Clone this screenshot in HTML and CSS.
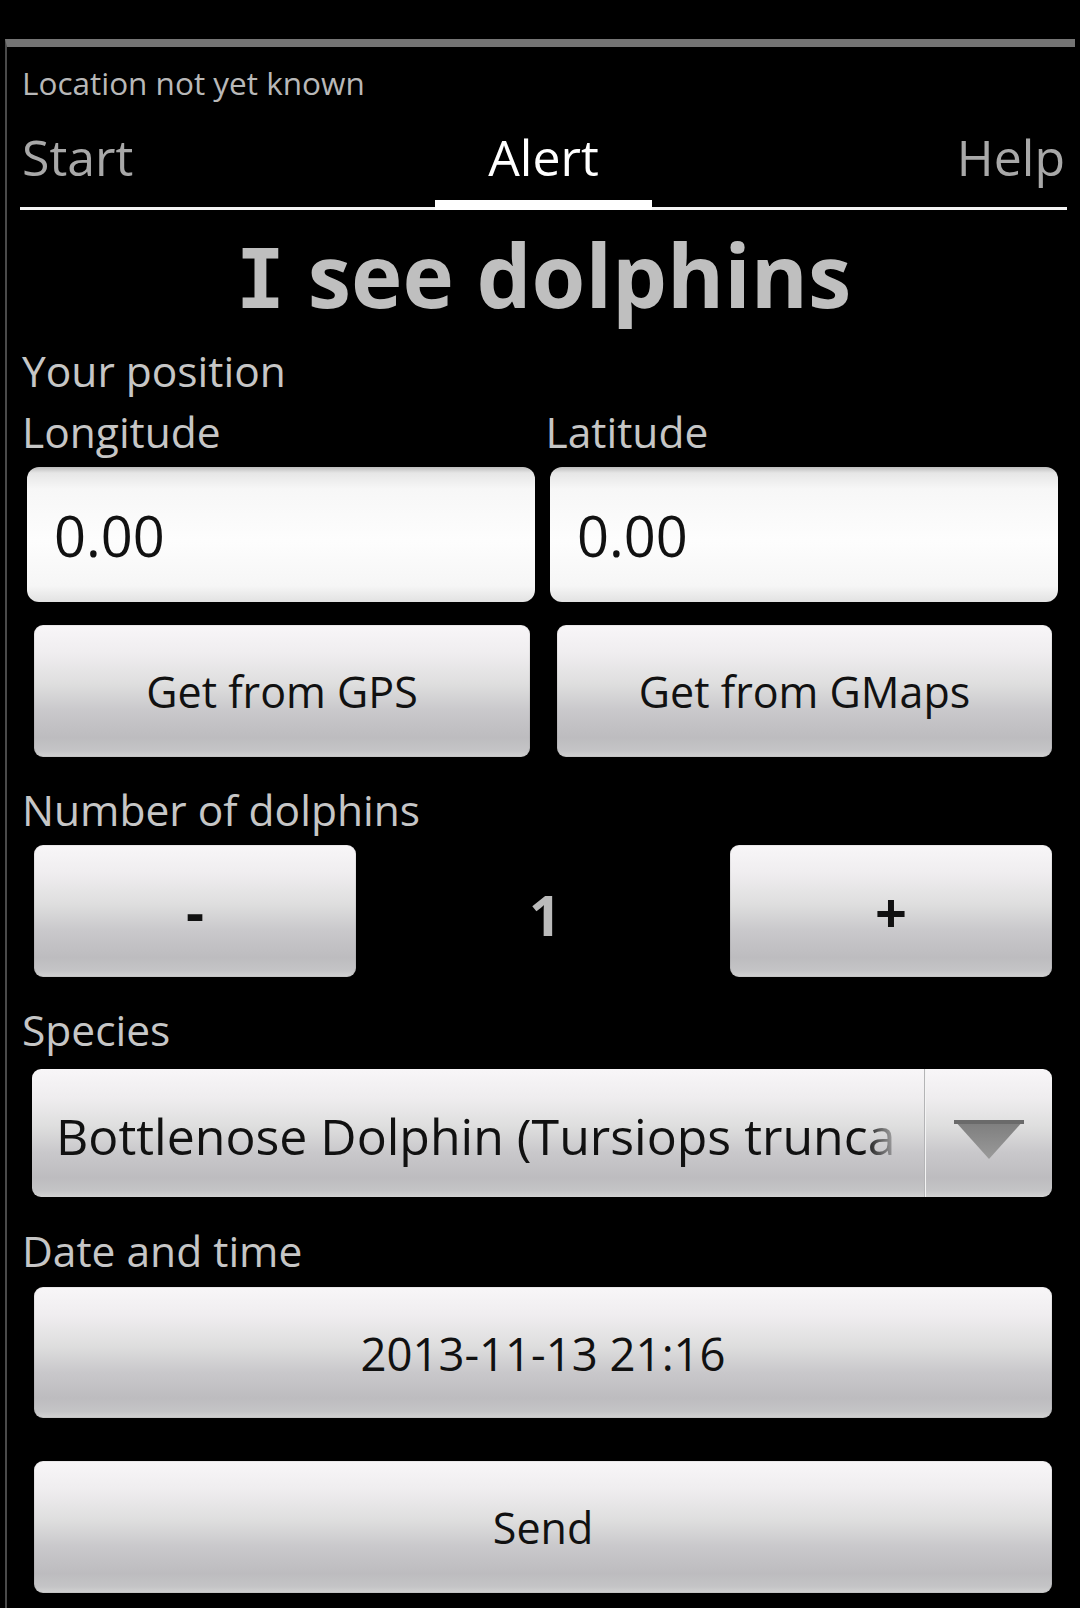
FILE: index.html
```html
<!DOCTYPE html>
<html>
<head>
<meta charset="utf-8">
<link rel="stylesheet" href="styles.css">
</head>
<body>
<div class="screen">
  <div class="window">
    <div class="loc">Location not yet known</div>
    <div class="tabs">
      <span class="tab tab-left">Start</span>
      <span class="tab tab-active">Alert</span>
      <span class="tab tab-right">Help</span>
    </div>
    <div class="tabline"><div class="seg"></div><div class="ind"></div><div class="seg"></div></div>
    <h1 class="title"><span class="cap-i">I</span> see dolphins</h1>
    <div class="label pos-label">Your position</div>
    <div class="cols labels2">
      <div class="label">Longitude</div>
      <div class="label">Latitude</div>
    </div>
    <div class="cols fields">
      <div class="field field-l">0.00</div>
      <div class="field field-r">0.00</div>
    </div>
    <div class="cols btns">
      <div class="btn btn-l">Get from GPS</div>
      <div class="btn btn-r">Get from GMaps</div>
    </div>
    <div class="label sec">Number of dolphins</div>
    <div class="counter">
      <div class="btn btn-sq sym">-</div>
      <div class="count">1</div>
      <div class="btn btn-sq sym">+</div>
    </div>
    <div class="label sec">Species</div>
    <div class="spinner">
      <div class="spin-text">Bottlenose Dolphin (Tursiops trunca</div>
      <div class="spin-arrow">
        <svg width="70" height="40" viewBox="0 0 70 40">
          <defs>
            <linearGradient id="ag" x1="0" y1="0" x2="0" y2="1">
              <stop offset="0" stop-color="#7c7c7c"/>
              <stop offset="1" stop-color="#9a9a9a"/>
            </linearGradient>
          </defs>
          <polygon points="0,0 70,0 35,39" fill="url(#ag)"/>
          <rect x="0" y="0" width="70" height="4" fill="#6a6a6a"/>
        </svg>
      </div>
    </div>
    <div class="label sec date-label">Date and time</div>
    <div class="btn btn-wide date-btn">2013-11-13 21:16</div>
    <div class="btn btn-wide send-btn">Send</div>
  </div>
</div>
</body>
</html>
```
FILE: styles.css
```css
html, body {
  margin: 0;
  padding: 0;
  background: #000;
}
body {
  font-family: "Open Sans", "DejaVu Sans", sans-serif;
  width: 1080px;
  height: 1608px;
  overflow: hidden;
}
.screen {
  padding-top: 39px;
}
.window {
  margin-left: 5px;
  width: 1070px;
  height: 1569px;
  box-sizing: border-box;
  border-top: 8px solid #747474;
  border-left: 2px solid #4a4a4a;
  padding: 16px 8px 0 13px;
}
.loc {
  font-size: 31.5px;
  line-height: 40px;
  height: 40px;
  color: #b8b8b8;
  padding-left: 2px;
}
.tabs {
  margin-top: 19px;
  height: 78px;
  line-height: 70px;
  font-size: 50px;
  display: grid;
  grid-template-columns: 1fr auto 1fr;
  color: #a8a8a8;
}
.tab-left { justify-self: start; padding-left: 2px; }
.tab-active { color: #fff; }
.tab-right { justify-self: end; padding-right: 2px; }
.tabline {
  height: 10px;
  display: flex;
  align-items: flex-end;
}
.tabline .seg {
  flex: 1;
  height: 3px;
  background: #f4f4f4;
}
.tabline .ind {
  width: 217px;
  height: 10px;
  background: #fff;
}
.title {
  margin: 14px 0 0 0;
  font-size: 87px;
  line-height: 100px;
  height: 100px;
  font-weight: bold;
  text-align: center;
  color: #bfbfbf;
  white-space: nowrap;
}
.cap-i {
  font-family: "DejaVu Sans Mono", monospace;
  font-size: 82px;
}
.label {
  font-size: 42.5px;
  line-height: 58px;
  height: 58px;
  color: #c6c6c6;
  padding-left: 2px;
  white-space: nowrap;
}
.pos-label { margin-top: 18px; }
.cols {
  display: grid;
  grid-template-columns: 1fr 1fr;
}
.labels2 { margin-top: 3px; }
.fields { margin-top: 6px; }
.field {
  height: 135px;
  box-sizing: border-box;
  border-radius: 12px;
  background: linear-gradient(#bdbdbd 0px, #e6e6e6 6px, #f7f7f7 22px, #fdfdfd 55%, #f6f6f6 88%, #e2e2e2 100%);
  font-size: 56px;
  line-height: 74px;
  padding: 31px 0 0 27px;
  color: #111;
}
.field-l { margin: 0 8.5px 0 7px; }
.field-r { margin: 0 9px 0 6.5px; }
.btn {
  box-sizing: border-box;
  border-radius: 9px;
  background: linear-gradient(#f8f6f8 0%, #efedef 22%, #dedede 45%, #c9c8cb 65%, #bdbcbf 85%, #c4c4c6 95%, #d2d2d2 100%);
  box-shadow: inset 0 0 0 1px rgba(0,0,0,0.06);
  color: #111;
  font-size: 43px;
  display: flex;
  align-items: center;
  justify-content: center;
  white-space: nowrap;
}
.btns { margin-top: 23px; }
.btns .btn { height: 132px; }
.btn-l { margin: 0 13.5px 0 14px; }
.btn-r { margin: 0 15px 0 13.5px; }
.sec { margin-top: 24px; }
.counter {
  margin: 6px 15px 0 14px;
  height: 132px;
  display: flex;
  justify-content: space-between;
  align-items: center;
}
.btn-sq {
  width: 322px;
  height: 132px;
}
.sym {
  font-weight: bold;
  font-size: 56px;
}
.count {
  font-size: 56px;
  font-weight: bold;
  color: #bbb;
  padding-top: 6px;
  padding-left: 4px;
}
.spinner {
  margin: 10px 15px 0 12px;
  height: 128px;
  border-radius: 9px;
  background: linear-gradient(#f8f6f8 0%, #efedef 22%, #dedede 45%, #c9c8cb 65%, #bdbcbf 85%, #c4c4c6 95%, #d2d2d2 100%);
  display: flex;
  align-items: stretch;
}
.spin-text {
  flex: 1;
  min-width: 0;
  white-space: nowrap;
  font-size: 50px;
  color: #111;
  display: flex;
  align-items: center;
  padding: 6px 0 0 24px;
  -webkit-mask-image: linear-gradient(to right, #000 calc(100% - 60px), rgba(0,0,0,0.2) calc(100% - 28px));
  mask-image: linear-gradient(to right, #000 calc(100% - 60px), rgba(0,0,0,0.2) calc(100% - 28px));
}
.spin-arrow {
  width: 128px;
  border-left: 1px solid #b4b4b6;
  box-shadow: inset 1px 0 0 #f4f4f4;
  display: flex;
  align-items: center;
  justify-content: center;
  padding-top: 14px;
  box-sizing: border-box;
}
.date-label { margin-top: 25px; }
.btn-wide {
  margin: 0 15px 0 14px;
}
.date-btn {
  margin-top: 7px;
  height: 131px;
  font-size: 45.5px;
}
.send-btn {
  margin-top: 43px;
  height: 132px;
}
```
